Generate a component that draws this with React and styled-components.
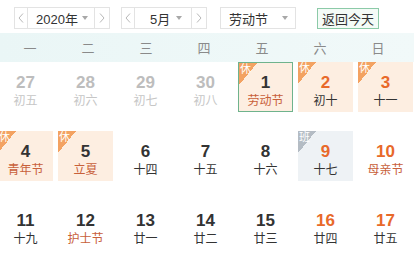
import React from 'react';
import styled, { createGlobalStyle } from 'styled-components';

const GlobalStyle = createGlobalStyle`
  body {
    margin: 0;
    background: #fff;
    font-family: "Liberation Sans", "Noto Sans CJK SC", sans-serif;
    color: #333;
  }
`;

const Wrap = styled.div`
  width: 414px;
  height: 269px;
  overflow: hidden;
  padding-top: 7px;
  box-sizing: border-box;
`;

const Toolbar = styled.div`
  display: flex;
  align-items: center;
  height: 22px;
  padding-left: 14px;
`;

const Stepper = styled.div`
  display: flex;
  height: 22px;
  width: ${props => props.width}px;
  margin-right: ${props => props.gap}px;
  border: 1px solid #e3e3e3;
  box-sizing: border-box;
`;

const ArrowBtn = styled.div`
  width: ${props => props.w || 12}px;
  display: flex;
  align-items: center;
  justify-content: center;
  border-${props => props.side}: 1px solid #e3e3e3;
`;

const SelectBox = styled.div`
  flex: 1;
  display: flex;
  align-items: center;
  justify-content: space-between;
  padding: 0 ${props => props.pr || 8}px 0 ${props => props.pl || 10}px;
  font-size: 13px;
  color: #333;
`;

const Select = styled.div`
  display: flex;
  align-items: center;
  justify-content: space-between;
  width: 76px;
  height: 22px;
  box-sizing: border-box;
  border: 1px solid #e3e3e3;
  padding: 0 7px 0 8px;
  font-size: 13px;
  margin-right: 21px;
`;

const Caret = styled.span`
  width: 0;
  height: 0;
  border-left: 3.5px solid transparent;
  border-right: 3.5px solid transparent;
  border-top: 4px solid #a8a8a8;
`;

const TodayBtn = styled.div`
  height: 21px;
  padding: 0 4px;
  display: flex;
  align-items: center;
  border: 1px solid #8ccaa8;
  background: #f4fbf7;
  font-size: 13px;
  color: #333;
  box-sizing: border-box;
`;

const WeekBar = styled.div`
  margin-top: 4px;
  height: 29px;
  display: grid;
  grid-template-columns: repeat(7, 58px);
  padding-left: 1px;
  align-items: center;
  background: linear-gradient(to right, #eaf6f6, #f1f9f9);
`;

const WeekDay = styled.div`
  text-align: center;
  font-size: 13px;
  color: #8a8a8a;
`;

const Grid = styled.div`
  display: grid;
  grid-template-columns: repeat(7, 60px);
  grid-auto-rows: 50px;
  row-gap: 19px;
  margin-left: -4px;
`;

const Cell = styled.div`
  position: relative;
  width: 55px;
  height: 50px;
  margin-left: 2px;
  box-sizing: border-box;
  display: flex;
  flex-direction: column;
  align-items: center;
  padding-top: ${props => (props.selected ? 10 : 11)}px;
  background: ${props =>
    props.type === 'rest' ? '#fdeee1' : props.type === 'work' ? '#eef2f5' : 'transparent'};
  border: ${props => (props.selected ? '1px solid #6fb38d' : 'none')};
  overflow: hidden;
`;

const Num = styled.div`
  font-size: 17px;
  font-weight: bold;
  line-height: 19px;
  color: ${props => (props.muted ? '#bdbdbd' : props.orange ? '#e8692a' : '#333')};
`;

const Lunar = styled.div`
  margin-top: 2px;
  font-size: 12px;
  line-height: 15px;
  color: ${props => (props.muted ? '#c6c6c6' : props.fest ? '#c8603a' : '#333')};
`;

const Corner = styled.div`
  position: absolute;
  left: 0;
  top: 0;
  width: 18px;
  height: 22px;
  background: linear-gradient(
    to bottom right,
    ${props => (props.work ? '#b4bcc4' : '#f3a262')} 50%,
    transparent 50%
  );
`;

const CornerText = styled.span`
  position: absolute;
  left: 1px;
  top: 0;
  font-size: 11px;
  line-height: 12px;
  color: #fff;
`;

const Chevron = ({ dir }) => (
  <svg width="6" height="10" viewBox="0 0 6 10">
    <polyline
      points={dir === 'left' ? '5,0.5 1,5 5,9.5' : '1,0.5 5,5 1,9.5'}
      fill="none"
      stroke="#b8b8b8"
      strokeWidth="1"
    />
  </svg>
);

const weekdays = ['一', '二', '三', '四', '五', '六', '日'];

const days = [
  { n: 27, l: '初五', muted: true },
  { n: 28, l: '初六', muted: true },
  { n: 29, l: '初七', muted: true },
  { n: 30, l: '初八', muted: true },
  { n: 1, l: '劳动节', type: 'rest', fest: true, selected: true },
  { n: 2, l: '初十', type: 'rest', orange: true },
  { n: 3, l: '十一', type: 'rest', orange: true },
  { n: 4, l: '青年节', type: 'rest', fest: true },
  { n: 5, l: '立夏', type: 'rest', fest: true },
  { n: 6, l: '十四' },
  { n: 7, l: '十五' },
  { n: 8, l: '十六' },
  { n: 9, l: '十七', type: 'work', orange: true },
  { n: 10, l: '母亲节', orange: true, fest: true },
  { n: 11, l: '十九' },
  { n: 12, l: '护士节', fest: true },
  { n: 13, l: '廿一' },
  { n: 14, l: '廿二' },
  { n: 15, l: '廿三' },
  { n: 16, l: '廿四', orange: true },
  { n: 17, l: '廿五', orange: true },
];

export default function App() {
  return (
    <Wrap>
      <GlobalStyle />
      <Toolbar>
        <Stepper width={96} gap={11}>
          <ArrowBtn side="right"><Chevron dir="left" /></ArrowBtn>
          <SelectBox pl={8} pr={6}>2020年<Caret /></SelectBox>
          <ArrowBtn side="left" w={14}><Chevron dir="right" /></ArrowBtn>
        </Stepper>
        <Stepper width={86} gap={13}>
          <ArrowBtn side="right"><Chevron dir="left" /></ArrowBtn>
          <SelectBox pl={15} pr={9}>5月<Caret /></SelectBox>
          <ArrowBtn side="left" w={14}><Chevron dir="right" /></ArrowBtn>
        </Stepper>
        <Select>劳动节<Caret /></Select>
        <TodayBtn>返回今天</TodayBtn>
      </Toolbar>
      <WeekBar>
        {weekdays.map(w => (
          <WeekDay key={w}>{w}</WeekDay>
        ))}
      </WeekBar>
      <Grid>
        {days.map(d => (
          <Cell key={`${d.n}-${d.l}`} type={d.type} selected={d.selected}>
            {d.type && (
              <Corner work={d.type === 'work'}>
                <CornerText>{d.type === 'work' ? '班' : '休'}</CornerText>
              </Corner>
            )}
            <Num muted={d.muted} orange={d.orange}>{d.n}</Num>
            <Lunar muted={d.muted} fest={d.fest}>{d.l}</Lunar>
          </Cell>
        ))}
      </Grid>
    </Wrap>
  );
}
